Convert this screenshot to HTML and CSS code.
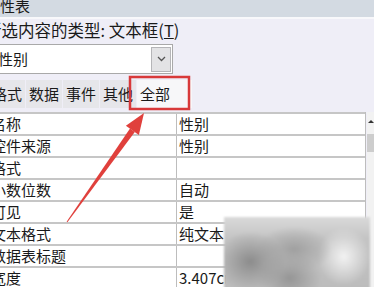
FILE: index.html
```html
<!DOCTYPE html>
<html lang="zh-CN">
<head>
    <meta charset="UTF-8">
    <meta name="viewport" content="width=device-width, initial-scale=1.0">
    <title>属性表</title>
    <link rel="stylesheet" href="styles.css">
</head>
<body>

<div class="sheet">
    <div class="titlebar"><span class="title">属性表</span></div>

    <div class="selection">所选内容的类型: 文本框(<u>T</u>)</div>

    <div class="combo">
        <span class="combo-text">性别</span>
        <span class="combo-btn">
            <svg width="9" height="6" viewBox="0 0 9 6"><path d="M1 1 L4.5 4.5 L8 1" fill="none" stroke="#555" stroke-width="1.3"/></svg>
        </span>
    </div>

    <div class="tabs">
        <span class="tab first">格式</span>
        <span class="tab">数据</span>
        <span class="tab">事件</span>
        <span class="tab">其他</span>
        <span class="tab active">全部</span>
    </div>

    <div class="grid-wrap">
        <div class="props">
            <div class="row"><span class="label">名称</span><span class="value">性别</span></div>
            <div class="row"><span class="label">控件来源</span><span class="value">性别</span></div>
            <div class="row"><span class="label">格式</span><span class="value"></span></div>
            <div class="row"><span class="label">小数位数</span><span class="value">自动</span></div>
            <div class="row"><span class="label">可见</span><span class="value">是</span></div>
            <div class="row"><span class="label">文本格式</span><span class="value">纯文本</span></div>
            <div class="row"><span class="label">数据表标题</span><span class="value"></span></div>
            <div class="row"><span class="label">宽度</span><span class="value">3.407cm</span></div>
        </div>
        <div class="scrollbar">
            <span class="scroll-up"></span>
            <span class="scroll-thumb"></span>
        </div>
    </div>
</div>

<!-- red annotation drawn over the sheet -->
<svg class="annot" width="374" height="287" viewBox="0 0 374 287">
    <rect x="130" y="77" width="59" height="32" fill="none" stroke="#d8393a" stroke-width="2.5"/>
    <polygon points="66.6,221.8 67.4,222.2 134.8,132.1 130,128.5" fill="#e0403c"/>
    <polygon points="144,113 125.9,125.7 138.9,134.9" fill="#e0403c"/>
</svg>

<div class="watermark"></div>

</body>
</html>
```

FILE: styles.css
```css
body {
    margin: 0;
    width: 374px;
    height: 287px;
    overflow: hidden;
    position: relative;
    background-color: #efeef7;
    font-family: "Noto Sans CJK SC", "Microsoft YaHei", sans-serif;
    font-size: 15px;
    color: #1a1a1a;
}

.sheet {
    display: flex;
    flex-direction: column;
}

.titlebar {
    height: 17px;
    background-color: #d3dae2;
    border-bottom: 2px solid #f8f8fb;
    overflow: hidden;
}

.title {
    display: block;
    margin-left: -15px;
    line-height: 12px;
}

.selection {
    margin-left: -15px;
    font-size: 16.5px;
    line-height: 22px;
    white-space: nowrap;
}

.combo {
    margin-top: 3px;
    margin-left: -3px;
    width: 176px;
    height: 30px;
    box-sizing: border-box;
    background-color: #fff;
    border: 1px solid #a9a9a9;
    display: flex;
    align-items: center;
    justify-content: space-between;
    padding-right: 1px;
}

.combo-text {
    line-height: 28px;
}

.combo-btn {
    width: 20px;
    height: 25px;
    box-sizing: border-box;
    background-color: #e3e3e5;
    border: 1px solid #b5b5b8;
    display: flex;
    align-items: center;
    justify-content: center;
}

.tabs {
    margin-top: 6px;
    margin-left: -11px;
    height: 28px;
    display: flex;
    gap: 1px;
    white-space: nowrap;
}

.tab {
    padding: 0 3px;
    line-height: 28px;
    background-color: #e6e6ea;
}

.tab.active {
    padding: 0 22px 0 3px;
    background-color: #f7f7f9;
}

.grid-wrap {
    margin-top: 4px;
    display: flex;
}

.props {
    margin-left: -10px;
    width: 375px;
    background-color: #fff;
    border-right: 1px solid #bdbdbd;
}

.row {
    display: grid;
    grid-template-columns: 187px 1fr;
    height: 22px;
    box-sizing: border-box;
    border-top: 2px solid #c6c6c6;
}

.label {
    padding-left: 1px;
    line-height: 20px;
    border-right: 1px solid #bdbdbd;
    white-space: nowrap;
}

.value {
    padding-left: 2px;
    line-height: 20px;
    white-space: nowrap;
}

.scrollbar {
    flex: 1;
    height: 176px;
    margin-left: 1px;
    background-color: #f2f2f2;
    display: flex;
    flex-direction: column;
    align-items: center;
}

.scroll-up {
    margin-top: 8px;
    width: 0;
    height: 0;
    border-left: 3px solid transparent;
    border-right: 3px solid transparent;
    border-bottom: 3px solid #333;
}

.scroll-thumb {
    margin-top: 11px;
    width: 100%;
    height: 18px;
    background-color: #cdcdcd;
}

.annot {
    position: absolute;
    left: 0;
    top: 0;
}

.watermark {
    position: absolute;
    left: 224px;
    top: 217px;
    width: 146px;
    height: 72px;
    background:
        radial-gradient(ellipse 24% 42% at 18% 62%, #8c8c8c 0%, rgba(140,140,140,0) 100%),
        radial-gradient(ellipse 26% 32% at 48% 45%, #a0a0a0 0%, rgba(160,160,160,0) 100%),
        radial-gradient(ellipse 22% 36% at 45% 85%, #969696 0%, rgba(150,150,150,0) 100%),
        radial-gradient(ellipse 18% 40% at 82% 55%, #f2f2f2 0%, rgba(242,242,242,0) 100%),
        linear-gradient(180deg, #dadada 0%, #c4c4c4 30%, #bcbcbc 100%);
    filter: blur(1px);
}
```
